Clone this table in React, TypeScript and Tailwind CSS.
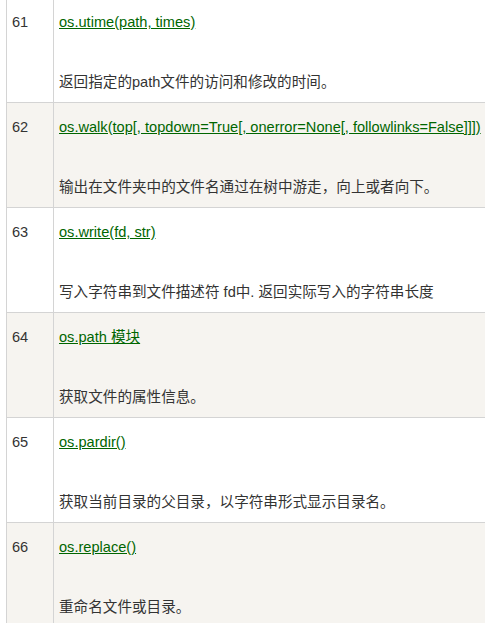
const rows = [
  { n: 61, fn: 'os.utime(path, times)', desc: '返回指定的path文件的访问和修改的时间。' },
  { n: 62, fn: 'os.walk(top[, topdown=True[, onerror=None[, followlinks=False]]])', desc: '输出在文件夹中的文件名通过在树中游走，向上或者向下。' },
  { n: 63, fn: 'os.write(fd, str)', desc: '写入字符串到文件描述符 fd中. 返回实际写入的字符串长度' },
  { n: 64, fn: 'os.path 模块', desc: '获取文件的属性信息。' },
  { n: 65, fn: 'os.pardir()', desc: '获取当前目录的父目录，以字符串形式显示目录名。' },
  { n: 66, fn: 'os.replace()', desc: '重命名文件或目录。' },
];

export default function App() {
  return (
    <div
      className="h-[623px] w-full overflow-hidden bg-white pl-[6px] text-[14.6px] text-[#333]"
      style={{ fontFamily: '"Liberation Sans", Arial, "Noto Sans CJK SC", sans-serif' }}
    >
      <table className="-mt-[3px] w-[540px] border-collapse">
        <tbody>
          {rows.map((r, i) => (
            <tr key={r.n} className={i % 2 ? 'bg-[#f6f4f0]' : 'bg-white'}>
              <td className="w-[47px] border border-[#d4d4d4] px-[5px] pt-[14px] align-top leading-[20px]">
                {r.n}
              </td>
              <td className="border border-[#d4d4d4] px-[5px] pt-[14px] pb-[10px] align-top leading-[20px]">
                <div>
                  <a href="#" className="text-[#006600] underline">
                    {r.fn}
                  </a>
                </div>
                <div className="mt-[40px]">{r.desc}</div>
              </td>
            </tr>
          ))}
        </tbody>
      </table>
    </div>
  );
}
